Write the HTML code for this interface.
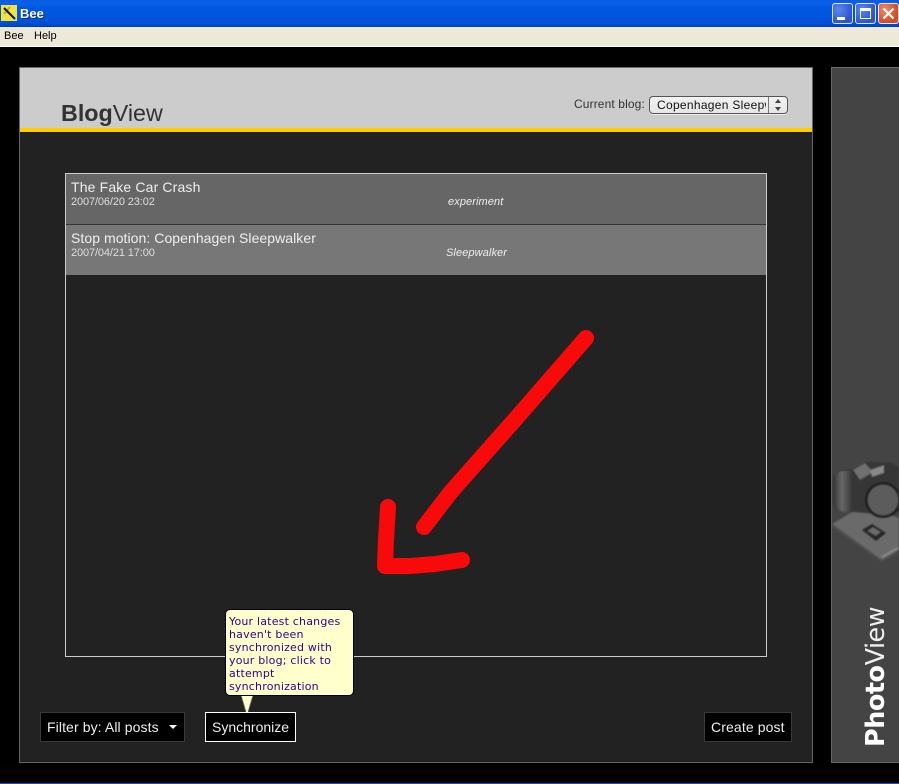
<!DOCTYPE html>
<html><head><meta charset="utf-8"><title>Bee</title>
<style>
html,body{margin:0;padding:0;background:#000;}
body{width:899px;height:784px;position:relative;overflow:hidden;font-family:"Liberation Sans",Arial,sans-serif;}
.a{position:absolute;box-sizing:border-box;white-space:nowrap;}
.btn{background:#000;color:#eee;border:1px solid #3a3a3a;font-size:14px;line-height:28px;padding-left:6px;}
.wb{border:1px solid #dfe6fb;border-radius:3px;width:21px;height:21px;top:3px;background:radial-gradient(circle at 30% 30%,#5c86ee,#2a52d0 75%,#3a62dc);}
</style></head><body>
<!-- title bar -->
<div class="a" style="left:0;top:0;width:899px;height:27px;background:linear-gradient(#0a5be0 0,#0a62ea 3px,#0058e2 8px,#0054dc 18px,#0050d8 23px,#0040b8 27px);"></div>
<svg class="a" style="left:1px;top:5px" width="16" height="16" viewBox="0 0 16 16"><rect width="16" height="16" fill="#f6e33a"/><path d="M9 2L3 9" stroke="#b9ae2a" stroke-width="2"/><path d="M3 3L14 14" stroke="#111" stroke-width="2"/></svg>
<div class="a" style="left:20px;top:6px;color:#fff;font-weight:bold;font-size:13px;line-height:16px;text-shadow:1px 1px 0 #0a2a90;">Bee</div>
<div class="a wb" style="left:832px;"><div class="a" style="left:4px;top:13px;width:8px;height:3px;background:#fff;"></div></div>
<div class="a wb" style="left:855px;"><div class="a" style="left:4px;top:4px;width:11px;height:11px;border:1px solid #fff;border-top:3px solid #fff;"></div></div>
<div class="a wb" style="left:878px;background:radial-gradient(circle at 30% 30%,#ee8a66,#d8441c 75%,#e05a30);"><svg class="a" style="left:3px;top:3px" width="13" height="13"><path d="M1.5 1.5L11.5 11.5M11.5 1.5L1.5 11.5" stroke="#fff" stroke-width="2.2"/></svg></div>
<!-- menu -->
<div class="a" style="left:0;top:27px;width:899px;height:19px;background:#ece9d8;"></div>
<div class="a" style="left:0;top:46px;width:899px;height:1px;background:#fff;"></div>
<div class="a" style="left:4px;top:30px;font-size:11px;line-height:13px;color:#000;">Bee</div>
<div class="a" style="left:34px;top:30px;font-size:11px;line-height:13px;color:#000;">Help</div>
<!-- blog panel -->
<div class="a" style="left:19px;top:67px;width:794px;height:696px;background:#222;border:1px solid #666;"></div>
<div class="a" style="left:20px;top:68px;width:792px;height:60px;background:#ccc;"></div>
<div class="a" style="left:20px;top:128px;width:792px;height:4px;background:#fc0;"></div>
<div class="a" style="left:61px;top:99px;font-size:23.3px;line-height:28px;color:#333;"><b>Blog</b>View</div>
<div class="a" style="left:574px;top:97px;font-size:12px;line-height:15px;letter-spacing:.12px;color:#333;">Current blog:</div>
<div class="a" style="left:649px;top:96px;width:139px;height:18px;background:linear-gradient(#f2f2f2,#e6e6e6);border:1px solid #555;border-radius:4px;box-shadow:0 1px 0 #eee;overflow:hidden;">
 <div class="a" style="left:7px;top:0;width:109px;overflow:hidden;font-size:12px;line-height:16px;letter-spacing:.3px;color:#111;">Copenhagen Sleepwalker</div>
 <div class="a" style="left:118px;top:0;width:1px;height:16px;background:#777;"></div>
 <svg class="a" style="left:124px;top:2px" width="8" height="13"><path d="M4 0L7 4H1ZM4 12L7 8H1Z" fill="#444"/></svg>
</div>
<!-- list -->
<div class="a" style="left:65px;top:173px;width:702px;height:484px;border:1px solid #ccc;background:#222;"></div>
<div class="a" style="left:66px;top:174px;width:700px;height:50px;background:#666;"></div>
<div class="a" style="left:66px;top:224px;width:700px;height:1px;background:#333;"></div>
<div class="a" style="left:66px;top:225px;width:700px;height:50px;background:#777;"></div>
<div class="a" style="left:71px;top:179px;font-size:14px;line-height:16px;letter-spacing:.15px;color:#eee;">The Fake Car Crash</div>
<div class="a" style="left:71px;top:196px;font-size:11px;line-height:13px;letter-spacing:-.12px;color:#ddd;">2007/06/20 23:02</div>
<div class="a" style="left:448px;top:196px;font-size:11px;line-height:13px;letter-spacing:.1px;font-style:italic;color:#eee;">experiment</div>
<div class="a" style="left:71px;top:230px;font-size:14px;line-height:16px;letter-spacing:.06px;color:#eee;">Stop motion: Copenhagen Sleepwalker</div>
<div class="a" style="left:71px;top:247px;font-size:11px;line-height:13px;letter-spacing:-.12px;color:#ddd;">2007/04/21 17:00</div>
<div class="a" style="left:446px;top:247px;font-size:11px;line-height:13px;letter-spacing:.1px;font-style:italic;color:#eee;">Sleepwalker</div>
<!-- arrow -->
<svg class="a" style="left:0;top:0" width="899" height="784" fill="none" stroke="#f80a0a" stroke-width="16" stroke-linecap="round" stroke-linejoin="round">
<path d="M586 338L519 415L450 493L424 527"/>
<path d="M388 507L386 540L385 566L410 566L435 564L462 560"/>
</svg>
<!-- buttons -->
<div class="a btn" style="left:40px;top:712px;width:145px;height:30px;letter-spacing:.1px;">Filter by: All posts</div>
<svg class="a" style="left:169px;top:725px" width="8" height="4"><path d="M0 0H8L4 4Z" fill="#fff"/></svg>
<div class="a btn" style="left:205px;top:712px;width:91px;height:30px;border-color:#fff;">Synchronize</div>
<div class="a btn" style="left:704px;top:712px;width:88px;height:30px;letter-spacing:.12px;">Create post</div>
<!-- tooltip -->
<svg class="a" style="left:240px;top:695px" width="14" height="18"><path d="M1 0H13L8 17H6Z" fill="#ffc"/><path d="M1 0L6 17M13 0L8 17" stroke="#666" stroke-width="1.2" stroke-dasharray="1 1"/></svg>
<div class="a" style="left:225px;top:609px;width:129px;height:87px;background:#ffffcc;border:1px solid #000;border-radius:5px;padding:5px 0 0 3px;font-family:'DejaVu Sans',sans-serif;font-size:11px;line-height:13px;letter-spacing:.2px;color:#308;">Your latest changes<br>haven't been<br>synchronized with<br>your blog; click to<br>attempt<br>synchronization</div>
<!-- photo panel -->
<div class="a" style="left:831px;top:67px;width:80px;height:696px;background:#444;border:1px solid #666;"></div>
<svg class="a" style="left:832px;top:460px" width="67" height="115" viewBox="0 0 67 115">
<defs><linearGradient id="g" x1="0" x2="1"><stop offset="0" stop-color="#333"/><stop offset=".45" stop-color="#686868"/><stop offset="1" stop-color="#333"/></linearGradient></defs>
<g style="filter:blur(.8px)">
<path d="M0 64L20 52L45 50L67 58V90L50 100Z" fill="#6a6a6a"/>
<path d="M0 66L50 101L67 91" stroke="#4e4e4e" stroke-width="2" fill="none"/>
<path d="M2 14Q10 8 22 9L34 2L60 3L67 8V52L45 54L22 52Q1 52 1 42Z" fill="#363636"/>
<path d="M1 16Q5 10 21 10V52Q5 54 1 42Z" fill="url(#g)"/>
<path d="M21 10L33 3L41 12L28 20Z" fill="#707070"/>
<path d="M38 10L52 5V13L40 17Z" fill="#888"/>
<circle cx="51" cy="40" r="18" fill="#1e1e1e"/><circle cx="51" cy="40" r="15.5" fill="#5c5c5c"/>
<path d="M30 70L40 64L54 73L44 81Z" fill="#262626"/><path d="M35 71L41 67L49 72L44 76Z" fill="#6a6a6a"/>
<path d="M50 97L66 88" stroke="#8a8a8a" stroke-width="2"/>
</g>
</svg>
<div class="a" style="left:861px;top:747px;font-family:'DejaVu Sans',sans-serif;font-size:25.5px;line-height:30px;color:#fff;transform-origin:0 0;transform:rotate(-90deg);letter-spacing:-.5px;"><b>Photo</b><span style="color:#eee;font-weight:normal;">View</span></div>
<div class="a" style="left:0;top:783px;width:899px;height:1px;background:#0a4fd0;"></div>
</body></html>
